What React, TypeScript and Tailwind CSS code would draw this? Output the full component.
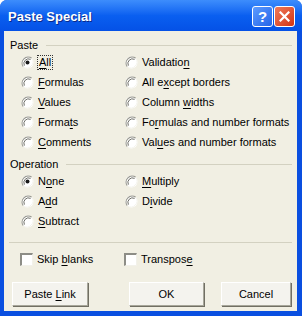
import React from "react";

type Opt = { pre: string; key: string; post: string; checked?: boolean; focus?: boolean };

const pasteLeft: Opt[] = [
  { pre: "", key: "A", post: "ll", checked: true, focus: true },
  { pre: "", key: "F", post: "ormulas" },
  { pre: "", key: "V", post: "alues" },
  { pre: "Forma", key: "t", post: "s" },
  { pre: "", key: "C", post: "omments" },
];

const pasteRight: Opt[] = [
  { pre: "Validatio", key: "n", post: "" },
  { pre: "All e", key: "x", post: "cept borders" },
  { pre: "Column ", key: "w", post: "idths" },
  { pre: "Fo", key: "r", post: "mulas and number formats" },
  { pre: "Val", key: "u", post: "es and number formats" },
];

const opLeft: Opt[] = [
  { pre: "N", key: "o", post: "ne", checked: true },
  { pre: "A", key: "d", post: "d" },
  { pre: "", key: "S", post: "ubtract" },
];

const opRight: Opt[] = [
  { pre: "", key: "M", post: "ultiply" },
  { pre: "D", key: "i", post: "vide" },
];

function Radio({ checked }: { checked?: boolean }) {
  return (
    <svg width="13" height="13" viewBox="0 0 13 13" className="shrink-0">
      <circle cx="6.5" cy="6.5" r="6" fill="#ffffff" />
      <path d="M10.7 2.3 A6 6 0 0 0 2.3 10.7" fill="none" stroke="#9a9a92" strokeWidth="1.2" />
      <path d="M9.6 3.4 A4.6 4.6 0 0 0 3.4 9.6" fill="none" stroke="#6f6f68" strokeWidth="1" />
      <path d="M2.3 10.7 A6 6 0 0 0 10.7 2.3" fill="none" stroke="#f4f3ec" strokeWidth="1" />
      {checked && <circle cx="6.5" cy="6.5" r="2" fill="#1a1a1a" />}
    </svg>
  );
}

function Check() {
  return (
    <span className="block w-[13px] h-[13px] shrink-0 bg-white border-t-2 border-l-2 border-b border-r border-t-[#8d8d86] border-l-[#8d8d86] border-b-[#f2f1ea] border-r-[#f2f1ea]" />
  );
}

function Label({ o }: { o: Opt }) {
  return (
    <span className={o.focus ? "outline outline-1 outline-dotted outline-[#333] px-[1px] leading-[13px]" : "leading-[13px]"}>
      {o.pre}
      <span className="underline underline-offset-2">{o.key}</span>
      {o.post}
    </span>
  );
}

function RadioRow({ o }: { o: Opt }) {
  return (
    <div className="h-5 flex items-center gap-1">
      <Radio checked={o.checked} />
      <Label o={o} />
    </div>
  );
}

function Group({ title, left, right }: { title: string; left: Opt[]; right: Opt[] }) {
  return (
    <div>
      <div className="h-[14px] flex items-center gap-2 pl-[6px] pr-[5px]">
        <span>{title}</span>
        <div className="flex-1 h-px bg-[#d3d1c1]" />
      </div>
      <div className="flex pl-[17px]">
        <div className="w-[104px] flex flex-col">
          {left.map((o) => (
            <RadioRow key={o.pre + o.key + o.post} o={o} />
          ))}
        </div>
        <div className="flex flex-col">
          {right.map((o) => (
            <RadioRow key={o.pre + o.key + o.post} o={o} />
          ))}
        </div>
      </div>
    </div>
  );
}

function Button({ children, w }: { children: React.ReactNode; w: string }) {
  return (
    <div
      className={`${w} h-6 flex items-center justify-center bg-[#f4f3ee] border border-t-white border-l-white border-r-[#a7a69a] border-b-[#a7a69a] shadow-[1px_1px_0_#716f64]`}
    >
      {children}
    </div>
  );
}

export default function App() {
  return (
    <div
      className="w-[302px] h-[316px] flex flex-col rounded-t-[7px] bg-[#0a4fe0] text-[11px] text-black overflow-hidden"
      style={{ fontFamily: '"Liberation Sans", Arial, sans-serif' }}
    >
      <div className="h-[31px] shrink-0 flex items-center justify-between pl-2 pr-[7px] pt-[2px] bg-gradient-to-b from-[#3d8dfc] via-[#0a5ff0] to-[#0551e6]">
        <span className="text-white font-bold text-[13px] [text-shadow:1px_1px_0_#0b2a8a]">Paste Special</span>
        <div className="flex gap-[1px]">
          <div className="w-[21px] h-[21px] rounded-[3px] border border-white bg-gradient-to-br from-[#5c9bff] to-[#2563e8] flex items-center justify-center text-white font-bold text-[15px] leading-none">
            ?
          </div>
          <div className="w-[21px] h-[21px] rounded-[3px] border border-white bg-gradient-to-br from-[#f07857] to-[#d2310e] flex items-center justify-center">
            <svg width="11" height="11" viewBox="0 0 11 11">
              <path d="M1.5 1.5 L9.5 9.5 M9.5 1.5 L1.5 9.5" stroke="#ffffff" strokeWidth="2.2" strokeLinecap="square" />
            </svg>
          </div>
        </div>
      </div>
      <div className="flex-1 ml-1 mr-[5px] mb-[5px] bg-[#f1efe3] flex flex-col pt-[7px]">
        <Group title="Paste" left={pasteLeft} right={pasteRight} />
        <div className="mt-[5px]">
          <Group title="Operation" left={opLeft} right={opRight} />
        </div>
        <div className="mt-[11px] mx-[5px] h-px bg-[#d3d1c1]" />
        <div className="mt-[6px] flex pl-4">
          <div className="w-[104px] h-5 flex items-center gap-1">
            <Check />
            <span>
              Skip <span className="underline underline-offset-2">b</span>lanks
            </span>
          </div>
          <div className="h-5 flex items-center gap-1">
            <Check />
            <span>
              Transpos<span className="underline underline-offset-2">e</span>
            </span>
          </div>
        </div>
        <div className="mt-[13px] flex pl-2 pr-1">
          <Button w="w-[76px]">
            <span>
              Paste <span className="underline underline-offset-2">L</span>ink
            </span>
          </Button>
          <div className="ml-[41px]">
            <Button w="w-[75px]">OK</Button>
          </div>
          <div className="ml-[17px]">
            <Button w="w-[70px]">Cancel</Button>
          </div>
        </div>
      </div>
    </div>
  );
}
